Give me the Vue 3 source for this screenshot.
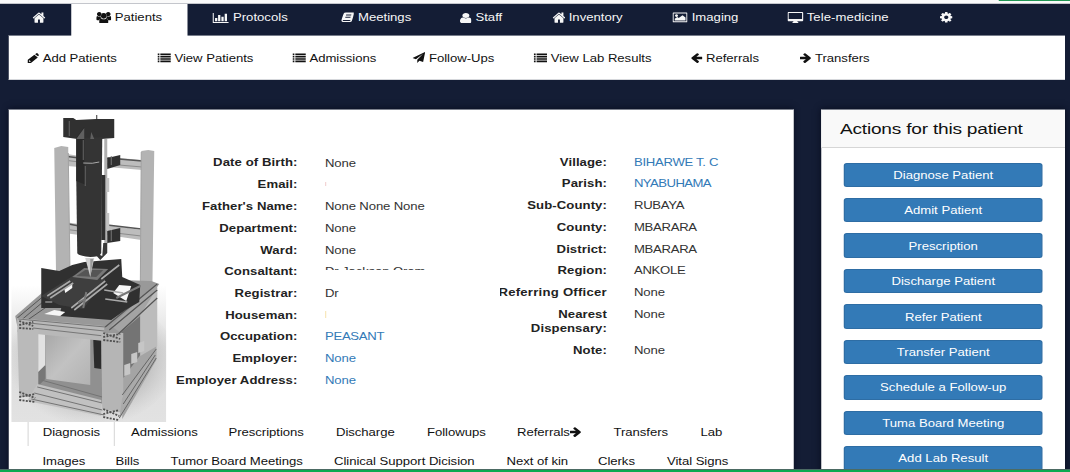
<script setup>
import { h } from 'vue'

const glyphs = {
  home: { box: '60 200 1680 1380', w: 10.4, t: 11, d: 'M1472 992v480q0 26-19 45t-45 19h-384v-384h-256v384h-384q-26 0-45-19t-19-45v-480q0-1 .5-3t.5-3l575-474 575 474q1 2 1 6zm223-69l-62 74q-8 9-21 11h-3q-13 0-21-7l-692-577-692 577q-12 8-24 7-13-2-21-11l-62-74q-8-10-7-23.5t11-21.5l719-599q32-26 76-26t76 26l244 204v-195q0-14 9-23t23-9h192q14 0 23 9t9 23v408l219 182q10 8 11 21.5t-7 23.5z' },
  cog: { box: '128 128 1536 1536', w: 10, t: 10.6, d: 'M1152 896q0-106-75-181t-181-75-181 75-75 181 75 181 181 75 181-75 75-181zm512-109v222q0 12-8 23t-20 13l-185 28q-19 54-39 91 35 50 107 138 10 12 10 25t-9 23q-27 37-99 108t-94 71q-12 0-26-9l-138-108q-44 23-91 38-16 136-29 186-7 28-36 28h-222q-14 0-24.5-8.5t-11.5-21.5l-28-184q-49-16-90-37l-141 107q-10 9-25 9-14 0-25-11-126-114-165-168-7-10-7-23 0-12 8-23 15-21 51-66.5t54-70.5q-27-50-41-99l-183-27q-13-2-21-12.5t-8-23.5v-222q0-12 8-23t19-13l186-28q14-46 39-92-40-57-107-138-10-12-10-24 0-10 9-23 26-36 98.5-107.5t94.5-71.5q13 0 26 10l138 107q44-23 91-38 16-136 29-186 7-28 36-28h222q14 0 24.5 8.5t11.5 21.5l28 184q49 16 90 37l142-107q9-9 24-9 13 0 25 10 129 119 165 170 7 8 7 22 0 12-8 23-15 21-51 66.5t-54 70.5q26 50 41 98l183 28q13 2 21 12.5t8 23.5z' },
  user: { box: '256 128 1280 1536', w: 9.4, t: 10, d: 'M1536 1399q0 109-62.5 187t-150.5 78h-854q-88 0-150.5-78t-62.5-187q0-85 8.5-160.5t31.5-152 58.5-131 94-89 134.5-34.5q131 128 313 128t313-128q76 0 134.5 34.5t94 89 58.5 131 31.5 152 8.5 160.5zm-256-887q0 159-112.5 271.5t-271.5 112.5-271.5-112.5-112.5-271.5 112.5-271.5 271.5-112.5 271.5 112.5 112.5 271.5z' },
  right: { box: '190 150 1420 1600', w: 8.8, t: 10, d: 'M1600 960q0 54-37 91l-651 651q-39 37-91 37-51 0-90-37l-75-75q-38-38-38-91t38-91l293-293h-704q-52 0-84.5-37.5t-32.5-90.5v-128q0-53 32.5-90.5t84.5-37.5h704l-293-294q-38-36-38-90t38-90l75-75q38-38 90-38 53 0 91 38l651 651q37 35 37 90z' },
  users: { box: '0 0 30 24', w: 12, t: 11.6, d: 'M6 0a4.500 4.500 0 1 0 .01 0zM24 0a4.500 4.500 0 1 0 .01 0zM15 2a6 6 0 1 0 .01 0zM2 8.500C0 9 0 12 0 15q0 2 2 2h4.500q1-3 3.500-4Q8.500 11.500 8.300 9Q5 10.500 2 8.500zM28 8.500c2 .5 2 3.500 2 6.500q0 2-2 2h-4.500q-1-3-3.500-4q1.500-1.500 1.700-4q3.300 1.500 6.300-.5zM10 13.500q5 3.500 10 0c4 0 4 4 4 7.500q0 3-3 3H9q-3 0-3-3c0-3.500 0-7.500 4-7.500z' },
  chart: { box: '0 0 32 24', w: 13, t: 10, d: 'M0 0h2.500v21.500h29.500v2.500H0zM5 12h4.500v7.500H5zM11 5h4.500v14.500H11zM17.500 9h4.500v10.500h-4.500zM24 2h4.500v17.500H24z' },
  book: { box: '0 0 28 24', w: 10.6, t: 11, d: 'M10 1h16q2 0 1.500 2l-5 16q-.7 3-4 3H4q-3 0-4-3q0-2 1-4L5 4q1-3 5-3zM10.500 5.500l-.7 2.300h11l.7-2.300zM9 10.500l-.7 2.300h11l.7-2.300zM3.500 17.500q-.8 2.200 1 2.200h13q1.500 0 2-1.500l.3-.7z' },
  image: { box: '0 0 30 24', w: 12, t: 10.8, d: 'M2 1h26q2 0 2 2v18q0 2-2 2H2q-2 0-2-2V3q0-2 2-2zM2.300 3.300v17.400h25.400V3.300zM8 5a3 3 0 1 0 .01 0zM4.500 19v-4l5-4 3 2.500L20 7l6 5v7z' },
  screen: { box: '0 0 32 24', w: 12.600, t: 11, d: 'M2 0h28q2 0 2 2v16q0 2-2 2H20q0 1.500 2 2.500V24H10v-1.500q2-1 2-2.500H2q-2 0-2-2V2q0-2 2-2zM2.400 2.200v13.300h27.200v-13.300z' },
  pencil: { box: '0 0 24 24', w: 9.4, t: 10, d: 'M0 17L14 4l7 7L7 24H0zM15.500 3l2-2q1.500-1.500 3.500 0l2 2.500q1.500 1.500 0 3l-1.500 1.500zM3 18.500V21h2.700l1-1L4 17.500z' },
  list: { box: '0 0 28 24', w: 10.6, t: 9.6, d: 'M0 1h4v4H0zM0 7h4v4H0zM0 13h4v4H0zM0 19h4v4H0zM6 1h22v4H6zM6 7h22v4H6zM6 13h22v4H6zM6 19h22v4H6z' },
  plane: { box: '0 0 24 24', w: 10.200, t: 11, d: 'M24 0l-4 22-7-3-4 5v-7L20 4 6.500 15.800 0 13z' }
}
glyphs.left = { ...glyphs.right, flip: true }

const Icon = (p) => {
  const g = glyphs[p.name]
  return h('svg', {
    class: ['icon', { flip: g.flip }], viewBox: g.box, width: g.w, height: g.t, preserveAspectRatio: 'none',
  }, [h('path', { d: g.d, fill: 'currentColor', 'fill-rule': 'evenodd' })])
}
Icon.props = ['name']

const nav = [
  { icon: 'home' },
  { icon: 'users', text: 'Patients', active: true },
  { icon: 'chart', text: 'Protocols' },
  { icon: 'book', text: 'Meetings' },
  { icon: 'user', text: 'Staff' },
  { icon: 'home', text: 'Inventory' },
  { icon: 'image', text: 'Imaging' },
  { icon: 'screen', text: 'Tele-medicine' },
  { icon: 'cog' },
]
const subnav = [
  { icon: 'pencil', text: 'Add Patients' },
  { icon: 'list', text: 'View Patients' },
  { icon: 'list', text: 'Admissions' },
  { icon: 'plane', text: 'Follow-Ups' },
  { icon: 'list', text: 'View Lab Results' },
  { icon: 'left', text: 'Referrals' },
  { icon: 'right', text: 'Transfers' },
]
const personal = [
  { label: 'Date of Birth:', value: 'None', cls: 'birth' },
  { label: 'Email:', value: '', cls: 'speck' },
  { label: "Father's Name:", value: 'None None None' },
  { label: 'Department:', value: 'None' },
  { label: 'Ward:', value: 'None' },
  { label: 'Consaltant:', value: 'Dr Jackson Orom', cls: 'cut' },
  { label: 'Registrar:', value: 'Dr' },
  { label: 'Houseman:', value: '', cls: 'tick' },
  { label: 'Occupation:', value: 'PEASANT', cls: 'link caps' },
  { label: 'Employer:', value: 'None', cls: 'link' },
  { label: 'Employer Address:', value: 'None', cls: 'link' },
]
const location = [
  { label: 'Village:', value: 'BIHARWE T. C', cls: 'link caps' },
  { label: 'Parish:', value: 'NYABUHAMA', cls: 'link caps tight' },
  { label: 'Sub-County:', value: 'RUBAYA', cls: 'caps' },
  { label: 'County:', value: 'MBARARA', cls: 'caps' },
  { label: 'District:', value: 'MBARARA', cls: 'caps' },
  { label: 'Region:', value: 'ANKOLE', cls: 'caps' },
  { label: 'Referring Officer', value: 'None', cls: 'officer' },
  { label: 'Nearest Dispensary:', value: 'None', cls: 'wrap' },
  { label: 'Note:', value: 'None' },
]
const tabs = ['Diagnosis', 'Admissions', 'Prescriptions', 'Discharge', 'Followups', 'Referrals', 'Transfers', 'Lab']
const moreTabs = ['Images', 'Bills', 'Tumor Board Meetings', 'Clinical Support Dicision', 'Next of kin', 'Clerks', 'Vital Signs']
const actions = ['Diagnose Patient', 'Admit Patient', 'Prescription', 'Discharge Patient', 'Refer Patient', 'Transfer Patient', 'Schedule a Follow-up', 'Tuma Board Meeting', 'Add Lab Result']
</script>

<template>
  <div class="page">
    <div class="topline"><i></i></div>
    <nav class="nav">
      <a v-for="(n, i) in nav" :key="i" :class="{ active: n.active }">
        <Icon :name="n.icon" /><span v-if="n.text">{{ n.text }}</span>
      </a>
    </nav>
    <nav class="subnav">
      <a v-for="n in subnav" :key="n.text"><Icon :name="n.icon" /><span>{{ n.text }}</span></a>
    </nav>

    <div class="columns">
      <main class="panel">
        <section class="details">
          <svg class="machine" viewBox="12 110 155 312" preserveAspectRatio="none">
            <defs>
              <linearGradient id="floor" x1="0" y1="0" x2="0" y2="1">
                <stop offset="0" stop-color="#fff" /><stop offset=".45" stop-color="#dcdcdc" /><stop offset="1" stop-color="#e2e2e2" />
              </linearGradient>
              <linearGradient id="box" x1="0" y1="0" x2="1" y2="1">
                <stop offset="0" stop-color="#a8a8a8" /><stop offset=".5" stop-color="#c2c2c2" /><stop offset="1" stop-color="#b2b2b2" />
              </linearGradient>
              <radialGradient id="shade" cx=".52" cy=".5" r=".5">
                <stop offset=".55" stop-color="#999" stop-opacity=".6" /><stop offset="1" stop-color="#bbb" stop-opacity="0" />
              </radialGradient>
            </defs>
            <path d="M12 285L167 285V422H12z" fill="url(#floor)" />
            <ellipse cx="90" cy="360" rx="86" ry="66" fill="url(#shade)" />
            <!-- uprights and cross rails -->
            <path d="M68 154L80 156V167L68 166zM108 157L143 160V170L108 167zM65 222L80 224V235L65 233zM108 225L142 230V240L108 235z" fill="#bdbdbd" />
            <path d="M64 156L80 158M108 158L143 161M64 223L80 226M108 225L142 229" stroke="#555" stroke-width="1.500" />
            <path d="M64 160L80 162M108 164L143 167M64 229L80 231M108 232L142 236" stroke="#8c8c8c" />
            <path d="M55 148L62 146 69 147V153L71 290H57zM142 151L149 150 155 151 153 298H141z" fill="#b3b3b3" />
            <path d="M69 153L71 290M142 152L141 298" stroke="#a2a2a2" />
            <!-- spindle -->
            <path d="M64 118H74L77 120 97 119V115H98V119L115 119V138L102 139H78L64 137z" fill="#303030" />
            <path d="M105 139H108V244H105z" fill="#b0b0b0" />
            <path d="M108 158L121 155V165L108 169zM108 231L121 228V241L108 243zM102 175H106V240H102z" fill="#303030" />
            <path d="M107 178H110V192H107zM107 213H110V230H107z" fill="#c4c4c4" />
            <path d="M112 156V165M112 230V241" stroke="#777" />
            <path d="M94 252L101 260L108 253V243H104L103 256z" fill="#383838" />
            <path d="M77 138L103 137 102 253Q101 257 91 257Q79 256 78 253L77 180z" fill="#343434" />
            <path d="M77 181V138L85 127V162L87 185" fill="#292929" />
            <path d="M77 139L85 128V139zM91 139L92 132L95 139z" fill="#606060" />
            <path d="M84 163Q94 164 100 162" fill="none" stroke="#aaa" />
            <path d="M86 166V186M84 140V160M70 121V136" stroke="#666" />
            <!-- table frame -->
            <path d="M16 316L60 278 152 281 160 284 121 335 18 326z" fill="#999" />
            <path d="M18 318L60 283M21 321L58 290M24 323L50 305" stroke="#565656" />
            <path d="M158 283L112 326L123 334V419L157 360z" fill="#a4a4a4" />
            <path d="M122 332L141 316V355L124 378z" fill="#747474" />
            <path d="M141 315L158 288 158 346 141 356z" fill="#bcbcbc" />
            <path d="M41 334H103V402H40z" fill="#909090" />
            <path d="M39 332H46V366L39 372z" fill="#e2e2e2" />
            <path d="M46 334L91 337 91 385 47 379z" fill="url(#box)" />
            <path d="M94 340H102V369L95 368z" fill="#2c2c2c" />
            <path d="M18 318L105 326V341L18 332z" fill="#b8b8b8" />
            <path d="M19 319L106 327M30 323L105 331M34 328L105 336" stroke="#777" />
            <path d="M18 330H39V397H20z" fill="#bababa" />
            <path d="M39 372L46 365V379L39 386z" fill="#777" />
            <path d="M38 384L102 400V416L28 401z" fill="#c1c1c1" />
            <path d="M42 380L103 397M38 387L103 403M35 393L103 410M32 399L105 415" stroke="#747474" />
            <path d="M102 333H124V413L103 409z" fill="#b5b5b5" />
            <path d="M123 398L157 348V359L120 419z" fill="#aaa" />
            <path d="M123 395L157 349M124 404L156 355M120 418L157 358" stroke="#666" />
            <path d="M106 327L158 284M110 330L158 290M119 334L158 298" stroke="#555" stroke-width="1.200" />
            <path d="M125 365L131 363V374L125 376zM132 354L138 352V362L132 364zM139 343L145 341V351L139 353z" fill="#c6c6c6" />
            <!-- slides -->
            <path d="M42 268L60 271 73 265 85 262 122 259 123 277 141 285 140 302 126 310 112 320 60 316 62 308 42 308z" fill="#303030" />
            <path d="M42 296L75 275 106 279 84 309 60 305z" fill="#3e3e3e" />
            <path d="M73 277L85 268 109 269 98 280z" fill="#777" />
            <path d="M77 276L86 270H104L97 277z" fill="#555" />
            <path d="M114 293L120 285 132 286 127 301zM65 289L73 283V288L66 293zM45 314L55 310L66 312 61 316z" fill="#f6f6f6" />
            <path d="M48 296L71 281M51 298L74 283M72 308L106 281M75 310L108 284M105 290L124 293M106 299L128 302M102 279L120 265" stroke="#aaa" stroke-width="1.600" />
            <path d="M46 302H53M79 303L86 299M87 292L84 308M117 298L141 286" stroke="#777" stroke-width="2" />
            <path d="M86 258H95L91 277Z" fill="#d0d0d0" /><path d="M91 259L91 277L94 259z" fill="#999" />
            <g fill="none" stroke="#505050" stroke-width="1.800" stroke-dasharray="2 1.300">
              <path d="M20 321L34 326M20 325L34 322M20 328L34 329M20 392L36 398M20 397L36 394M20 400L36 402M104 333L121 339M104 337L121 334M104 340L121 342M104 409L120 416M104 414L120 410M104 417L119 420" />
            </g>
          </svg>
          <dl class="fields personal">
            <div v-for="f in personal" :key="f.label" :class="['row', f.cls]"><dt>{{ f.label }}</dt><dd>{{ f.value }}</dd></div>
          </dl>
          <dl class="fields location">
            <div v-for="f in location" :key="f.label" :class="['row', f.cls]"><dt><span>{{ f.label }}</span></dt><dd>{{ f.value }}</dd></div>
          </dl>
        </section>
        <div class="tabs first">
          <a v-for="t in tabs" :key="t">{{ t }}<Icon v-if="t === 'Referrals'" name="right" /></a>
        </div>
        <div class="tabs second"><a v-for="t in moreTabs" :key="t">{{ t }}</a></div>
      </main>
      <aside class="panel actions">
        <h2>Actions for this patient</h2>
        <div class="buttons"><button v-for="a in actions" :key="a">{{ a }}</button></div>
      </aside>
    </div>
    <div class="bottomline"></div>
  </div>
</template>

<style>
html, body { margin: 0; overflow: hidden; }
</style>

<style scoped>
.page {
  box-sizing: border-box;
  position: relative;
  width: 856px;
  height: 472px;
  overflow: hidden;
  transform: scaleX(1.25);
  transform-origin: 0 0;
  background: #141d35;
  color: #111;
  font: 10.5px/14.45px "Liberation Sans", Arial, sans-serif;
  display: flex;
  flex-direction: column;
}
.topline { flex: none; height: 4px; box-sizing: border-box; background: #fafafa; border-bottom: 1px solid #c4c6cc; display: flex; justify-content: flex-end; }
.topline i { width: 56.800px; height: 1px; background: #219653; }
.icon { flex: none; display: block; }
.flip { transform: scaleX(-1); }

.nav { flex: none; height: 31px; display: grid; grid-template-columns: 56.800px 93.600px 102.400px 95.200px 73.600px 96.800px 92px 121.600px 60px; color: #f7f7f7; }
.nav a { display: flex; align-items: center; gap: 3px; padding: 0 0 4px 20px; white-space: nowrap; }
.nav a:first-child { padding-left: 26.400px; }
.nav a:nth-child(8) span { letter-spacing: .06px; margin-left: -.6px; }
.nav .active { background: #fff; color: #111; margin-bottom: -1px; padding-bottom: 5px; position: relative; }
.subnav { flex: none; box-sizing: border-box; height: 45px; width: 844.800px; margin-left: 7.200px; padding: 1px 0 0 14.600px; background: #fff; border-top: 1px solid #777d8b; border-bottom: 1px solid #d5d7db; display: grid; grid-template-columns: 104.200px 108px 96px 97px 126px 87.200px 90px; align-items: center; }
.subnav a { display: flex; align-items: center; gap: 3px; white-space: nowrap; letter-spacing: -.02px; }

.columns { flex: 1; min-height: 0; display: flex; gap: 22px; padding: 29px 0 0 7.200px; }
.panel { box-sizing: border-box; width: 628px; height: 365px; background: #fff; border-top: 1px solid #7c818d; box-shadow: 0 0 6px #070c1d; }
.details { height: 312px; display: grid; grid-template-columns: 124.400px 266.400px 230px; padding-left: 2px; }
.machine { width: 124px; height: 312px; display: block; }
.fields { margin: 0; padding-top: 44.700px; }
.row { display: grid; gap: 22px; margin-bottom: 7.250px; }
.personal .row { grid-template-columns: 104.400px 140px; }
.location .row { grid-template-columns: 85.600px 120px; gap: 21.600px; }
dt { text-align: right; font-weight: 700; color: #222; white-space: nowrap; letter-spacing: .07px; }
dd { margin: 0; color: #333; white-space: nowrap; letter-spacing: -.1px; }
.link dd { color: #337ab7; }
.caps dd { letter-spacing: -.23px; }
.tight dd { letter-spacing: -.45px; }
.birth { margin-bottom: 8.300px; }
.birth dd { padding-top: 1px; margin-bottom: -1px; }
.cut dd { height: 5.500px; overflow: hidden; }
.speck dd::before, .tick dd::before { content: ""; display: block; width: .8px; height: 4px; margin-top: 5px; background: #f3d5d5; }
.tick dd::before { height: 7px; margin-top: 3px; background: #f8e8bd; }
.officer dt { display: flex; justify-content: flex-end; overflow: hidden; letter-spacing: .2px; }
.wrap dt { white-space: normal; }

.tabs { display: grid; align-items: center; white-space: nowrap; padding-left: 26.800px; letter-spacing: -.03px; }
.first { height: 24px; grid-template-columns: 70.800px 78px 86px 72.800px 72px 77.200px 69.600px 60px; }
.first a { display: flex; align-items: center; height: 24px; box-sizing: border-box; padding-bottom: 4px; }
.first a:first-child { margin-left: -11.600px; padding-left: 10.800px; border-left: .8px solid #ddd; border-right: .8px solid #ddd; width: 69.600px; }
.second { height: 30px; grid-template-columns: 58.400px 44px 130.800px 138px 73.200px 55.200px 80px; }

.actions { width: 194.800px; }
h2 { box-sizing: border-box; margin: 0; height: 37.500px; padding-left: 14.800px; font-size: 15.300px; letter-spacing: -.18px; line-height: 37px; font-weight: 400; color: #111; background: #f9f9f9; border-bottom: 1px solid #d6d6d6; white-space: nowrap; }
.buttons { display: flex; flex-direction: column; gap: 10.950px; padding: 15px 17.600px 0 17.600px; }
button { box-sizing: border-box; height: 24.500px; flex: none; padding: 0; border: 1px solid #2e6da4; border-radius: 2.500px; background: #337ab7; color: #fff; font: inherit; line-height: 22px; }
.bottomline { position: absolute; left: 0; right: 0; bottom: 0; height: 2px; background: #0caa50; border-top: 1px solid #4c6a63; }
</style>
